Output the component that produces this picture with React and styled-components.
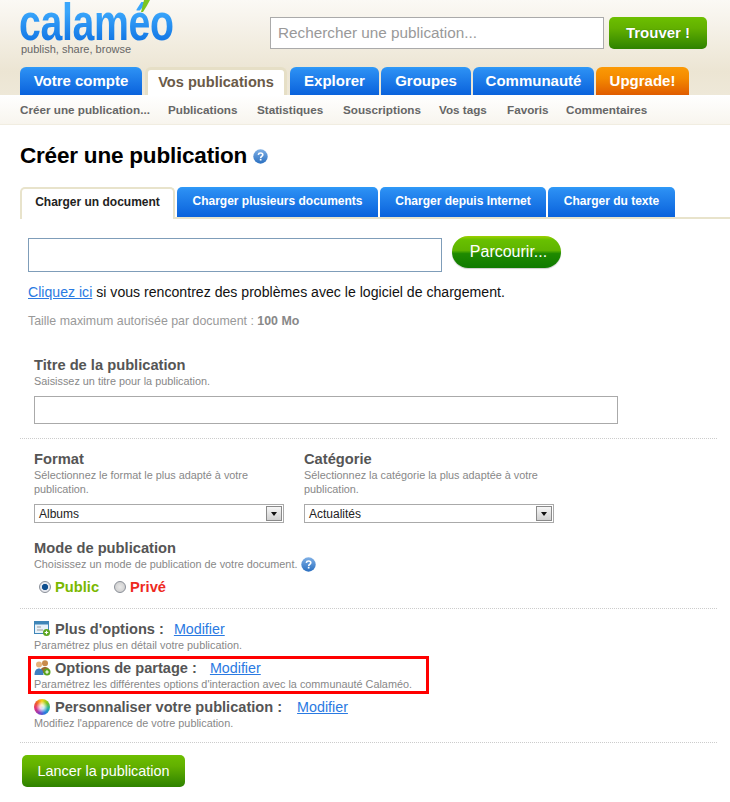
import React from "react";
import styled, { createGlobalStyle } from "styled-components";

const Global = createGlobalStyle`
  html, body { margin: 0; padding: 0; background: #fff; }
  body { font-family: "Liberation Sans", Arial, sans-serif; width: 730px; height: 802px; overflow: hidden; }
  * { box-sizing: border-box; }
`;

const blue = "linear-gradient(#2f9bf8 0%, #2a8df2 12%, #0a62dc 100%)";
const orange = "linear-gradient(#fb9a05 0%, #f48a00 40%, #e05c00 100%)";
const green = "linear-gradient(#6dbf00 0%, #62b000 35%, #2e8200 100%)";

const Page = styled.div`width: 730px; height: 802px; background: #fff;`;
const Header = styled.header`
  height: 95px;
  background: linear-gradient(#fbf9f5 0%, #ece5d3 75%, #eee8d8 100%);
  padding-left: 20px;
  display: flex;
  flex-direction: column;
`;
const TopRow = styled.div`height: 67px; display: flex;`;
const Brand = styled.div`width: 250px; position: relative; height: 67px;`;
const LogoText = styled.div`
  font-family: "Liberation Sans", sans-serif;
  font-weight: 700;
  font-size: 52px;
  line-height: 43px;
  height: 43px;
  margin: 1px 0 -1px -1px;
  letter-spacing: -0.5px;
  width: 206px;
  white-space: nowrap;
  background: linear-gradient(#3aa6fb 25%, #1479e6 90%);
  -webkit-background-clip: text;
  background-clip: text;
  color: transparent;
  transform: scaleX(0.755);
  transform-origin: 0 0;
`;
const Leaf = styled.svg`position: absolute; left: 118px; top: 0;`;
const Tagline = styled.div`font-size: 11px; line-height: 13px; color: #666; margin-left: 1px;`;
const SearchBox = styled.div`
  width: 334px; height: 32px; margin-top: 17px; background: #fff; border: 1px solid #aaa;
  font-size: 15.3px; line-height: 29px; color: #999; padding-left: 7px;
`;
const FindButton = styled.div`
  width: 98px; height: 32px; margin: 17px 0 0 5px; border-radius: 5px; background: ${green};
  color: #fff; font-weight: 700; font-size: 15px; line-height: 31px; text-align: center; text-shadow: 0 0 1px #246600;
`;
const MainTabs = styled.nav`display: flex; height: 28px; align-items: flex-end;`;
const MainTab = styled.div`
  width: ${p => p.$w}px; margin-right: ${p => p.$gap}px; height: 28px;
  border-radius: 6px 6px 0 0; text-align: center; font-weight: 700; font-size: 15px; line-height: 28px;
  color: #fff; background: ${p => (p.$tone === "orange" ? orange : blue)};
  ${p => p.$active && `
    background: #fff; color: #6a5a48; border: 3px solid #e6dfc6; border-bottom: 0; line-height: 24px; font-size: 14.6px;
  `}
`;
const SubNav = styled.nav`
  height: 30px; display: flex; padding-left: 20px; background: linear-gradient(#ffffff, #f8f5ee);
  border-bottom: 1px solid #f1ede1;
  font-size: 11.7px; font-weight: 700; color: #666; line-height: 29px;
`;
const SubItem = styled.span`width: ${p => p.$w}px; white-space: nowrap;`;
const Title = styled.h1`
  margin: 17px 0 0 20px; height: 28px; display: flex; align-items: center; gap: 6px;
  font-size: 22.5px; line-height: 28px; font-weight: 700; color: #000; letter-spacing: -0.2px;
`;
const Help = ({ size = 15 }) => (
  <svg width={size} height={size} viewBox="0 0 15 15" aria-hidden="true">
    <defs>
      <linearGradient id="hg" x1="0" y1="0" x2="0" y2="1">
        <stop offset="0" stopColor="#7fb0e6" />
        <stop offset="1" stopColor="#2a6fc0" />
      </linearGradient>
    </defs>
    <circle cx="7.5" cy="7.5" r="7.2" fill="url(#hg)" />
    <path d="M5.3 5.8c.2-1.2 1.1-1.8 2.3-1.8 1.3 0 2.2.7 2.2 1.8 0 1.7-2.1 1.6-2.1 3.1" fill="none" stroke="#fff" strokeWidth="1.6" />
    <rect x="6.8" y="9.8" width="1.7" height="1.7" fill="#fff" />
  </svg>
);
const DocTabs = styled.div`
  margin: 17px 0 0 20px; height: 32px; display: flex; align-items: flex-start;
  border-bottom: 2px solid #e8e3cb;
`;
const DocTab = styled.div`
  width: ${p => p.$w}px; margin-right: 2px; height: 30px; border-radius: 5px 5px 0 0;
  background: ${blue}; color: #fff; font-size: 12px; font-weight: 700; line-height: 29px; text-align: center;
  ${p => p.$active && `
    height: 32px; margin-bottom: -2px; background: #fff; color: #222; border: 2px solid #e8e3cb; border-bottom: 0; line-height: 27px;
  `}
`;
const Upload = styled.div`padding: 17px 0 0 28px; display: flex; align-items: flex-start;`;
const FileBox = styled.div`width: 414px; height: 34px; margin-top: 2px; border: 1px solid #7f9db9; background: #fff;`;
const Browse = styled.div`
  width: 109px; height: 32px; margin-left: 10px; padding-left: 4px; border-radius: 16px; color: #fff; font-size: 16px; line-height: 32px;
  text-align: center; background: linear-gradient(#9ed000 0%, #68c000 12%, #5fb400 45%, #1f8a00 55%, #0f7a00 100%);
  box-shadow: 0 1px 1px #ccc;
`;
const LinkLine = styled.p`margin: 12px 0 0 28px; font-size: 14.12px; line-height: 16px; color: #111; height: 16px;`;
const A = styled.a`color: #2a7ae2; text-decoration: underline;`;
const Limit = styled.p`margin: 14px 0 0 28px; font-size: 12.4px; line-height: 14px; color: #999; height: 14px; b { color: #888; }`;
const Section = styled.section`padding-left: 34px; margin-top: ${p => p.$top}px;`;
const Label = styled.div`font-size: 14.7px; font-weight: 700; line-height: 16px; color: #555;`;
const Hint = styled.div`font-size: 10.85px; line-height: 14px; color: #888; margin-top: ${p => p.$top || 0}px; white-space: ${p => (p.$wrap ? "normal" : "nowrap")};`;
const TextBox = styled.div`width: 584px; height: 28px; margin-top: 8px; border: 1px solid #aaa; background: #fff;`;
const Dotted = styled.div`margin-left: 20px; width: 697px; margin-top: ${p => p.$top}px; border-top: 1px dotted #ccc;`;
const Columns = styled.div`display: flex; padding: 12px 0 0 34px;`;
const Col = styled.div`width: 270px;`;
const ColHint = styled(Hint)`width: 235px; height: 28px; margin-top: 1px;`;
const Select = styled.div`
  width: 250px; height: 19px; margin-top: 8px; border: 1px solid #aaa; background: #fff;
  display: flex; justify-content: space-between; font-size: 12px; line-height: 18px; color: #222; padding-left: 4px;
`;
const Arrow = styled.div`
  width: 16px; height: 15px; margin: 1px; background: linear-gradient(#f6f6f6, #d0d0d0); border: 1px solid #8a8a8a;
  display: flex; align-items: center; justify-content: center;
  &::after { content: ""; border: 3.5px solid transparent; border-top: 4px solid #111; border-bottom: 0; }
`;
const HintRow = styled.div`display: flex; align-items: center; gap: 4px; height: 16px;`;
const Radios = styled.div`display: flex; align-items: center; height: 16px; margin: 7px 0 0 5px; font-size: 14.7px; font-weight: 700;`;
const Radio = styled.span`
  width: 12px; height: 12px; border-radius: 50%; margin-right: 4px;
  border: 1px solid #8a8f98;
  background: ${p => (p.$on ? "radial-gradient(circle, #0f4f8f 0 2.8px, #e6e8ee 3.4px)" : "radial-gradient(circle, #e8e8e8, #c8c8c8)")};
`;
const RadioLabel = styled.span`color: ${p => p.$c}; margin-right: ${p => p.$gap}px;`;
const OptionHead = styled.div`display: flex; align-items: center; height: 16px;`;
const IconSlot = styled.span`width: 21px; height: 16px; display: flex; align-items: center; flex: none;`;
const OptionLabel = styled.span`font-size: 14.6px; font-weight: 700; color: #555; margin-right: ${p => p.$gap}px; white-space: nowrap;`;
const OptionLink = styled(A)`font-size: 14.3px;`;
const Option = styled.div`margin-left: 34px; height: 35px; margin-top: ${p => p.$top}px;`;
const Highlight = styled.div`
  margin-left: 28px; width: 401px; height: 38px; border: 3px solid #f00; padding: 1px 0 0 3px;
`;
const Launch = styled.div`
  margin: 12px 0 0 22px; width: 163px; height: 32px; border-radius: 5px; background: ${green};
  color: #fff; font-size: 14.4px; line-height: 32px; text-align: center;
`;

const OptionsIcon = () => (
  <svg width="17" height="16" viewBox="0 0 17 16" aria-hidden="true">
    <rect x="0.5" y="0.5" width="14" height="12" fill="#e8f2fa" stroke="#3f86b8" />
    <rect x="1" y="1" width="13" height="2.5" fill="#3f86b8" />
    <path d="M3 6h4M3 9h6" stroke="#999" strokeWidth="1.2" />
    <circle cx="12.5" cy="11.5" r="3.5" fill="#5aa51e" />
    <path d="M10.7 11.5h3.6M12.5 9.7v3.6" stroke="#fff" strokeWidth="1.2" />
  </svg>
);
const ShareIcon = () => (
  <svg width="17" height="16" viewBox="0 0 17 16" aria-hidden="true">
    <circle cx="11" cy="3.2" r="3" fill="#c98a4a" />
    <path d="M6 13c0-4 2-6 5-6s5 2 5 6z" fill="#9a6a30" />
    <circle cx="5" cy="4.5" r="3" fill="#e6b27a" />
    <path d="M0.5 15c0-4.5 2-6.5 4.5-6.5s4.5 2 4.5 6.5z" fill="#3f7fc0" />
    <circle cx="13" cy="12" r="3.5" fill="#5aa51e" />
    <path d="M11.2 12h3.6M13 10.2v3.6" stroke="#fff" strokeWidth="1.2" />
  </svg>
);
const Wheel = styled.span`
  display: block; width: 16px; height: 16px; border-radius: 50%;
  background: radial-gradient(circle, rgba(255,255,255,.8) 0 2px, rgba(255,255,255,0) 6px),
    conic-gradient(#f7d31a, #7cc520, #22b0a0, #2a7ae2, #8a3ec0, #e0307a, #f0602a, #f7d31a);
`;

const tabs = [
  ["Votre compte", 122, 3], ["Vos publications", 142, 3, true], ["Explorer", 89, 2],
  ["Groupes", 90, 2], ["Communauté", 121, 2], ["Upgrade!", 93, 0, false, "orange"],
];
const sub = [
  ["Créer une publication...", 148], ["Publications", 89], ["Statistiques", 86], ["Souscriptions", 96],
  ["Vos tags", 68], ["Favoris", 59], ["Commentaires", 100],
];
const docTabs = [
  ["Charger un document", 155, true], ["Charger plusieurs documents", 201], ["Charger depuis Internet", 166], ["Charger du texte", 127],
];

export default function App() {
  return (
    <Page>
      <Global />
      <Header>
        <TopRow>
          <Brand>
            <LogoText>calaméo</LogoText>
            <Leaf width="14" height="12" viewBox="0 0 14 12"><path d="M3 12 L6 0 H12 Q9 6 5 12z" fill="#7cc520" /></Leaf>
            <Tagline>publish, share, browse</Tagline>
          </Brand>
          <SearchBox>Rechercher une publication...</SearchBox>
          <FindButton>Trouver !</FindButton>
        </TopRow>
        <MainTabs>
          {tabs.map(([t, w, g, a, tone]) => <MainTab key={t} $w={w} $gap={g} $active={a} $tone={tone}>{t}</MainTab>)}
        </MainTabs>
      </Header>
      <SubNav>{sub.map(([t, w]) => <SubItem key={t} $w={w}>{t}</SubItem>)}</SubNav>
      <Title>Créer une publication <Help /></Title>
      <DocTabs>{docTabs.map(([t, w, a]) => <DocTab key={t} $w={w} $active={a}>{t}</DocTab>)}</DocTabs>
      <Upload>
        <FileBox />
        <Browse>Parcourir...</Browse>
      </Upload>
      <LinkLine><A href="#">Cliquez ici</A> si vous rencontrez des problèmes avec le logiciel de chargement.</LinkLine>
      <Limit>Taille maximum autorisée par document : <b>100 Mo</b></Limit>
      <Section $top={29}>
        <Label>Titre de la publication</Label>
        <Hint $top={1}>Saisissez un titre pour la publication.</Hint>
        <TextBox />
      </Section>
      <Dotted $top={14} />
      <Columns>
        <Col>
          <Label>Format</Label>
          <ColHint $wrap>Sélectionnez le format le plus adapté à votre publication.</ColHint>
          <Select>Albums<Arrow /></Select>
        </Col>
        <Col>
          <Label>Catégorie</Label>
          <ColHint $wrap>Sélectionnez la catégorie la plus adaptée à votre publication.</ColHint>
          <Select>Actualités<Arrow /></Select>
        </Col>
      </Columns>
      <Section $top={17}>
        <Label>Mode de publication</Label>
        <HintRow><Hint>Choisissez un mode de publication de votre document.</Hint><Help /></HintRow>
        <Radios>
          <Radio $on /><RadioLabel $c="#7ab800" $gap={15}>Public</RadioLabel>
          <Radio /><RadioLabel $c="#ee2a1f" $gap={0}>Privé</RadioLabel>
        </Radios>
      </Section>
      <Dotted $top={13} />
      <Option $top={12}>
        <OptionHead><IconSlot><OptionsIcon /></IconSlot><OptionLabel $gap={10}>Plus d'options :</OptionLabel><OptionLink href="#">Modifier</OptionLink></OptionHead>
        <Hint $top={1}>Paramétrez plus en détail votre publication.</Hint>
      </Option>
      <Highlight>
        <OptionHead><IconSlot><ShareIcon /></IconSlot><OptionLabel $gap={13}>Options de partage :</OptionLabel><OptionLink href="#">Modifier</OptionLink></OptionHead>
        <Hint $top={1}>Paramétrez les différentes options d'interaction avec la communauté Calaméo.</Hint>
      </Highlight>
      <Option $top={5}>
        <OptionHead><IconSlot><Wheel /></IconSlot><OptionLabel $gap={15}>Personnaliser votre publication :</OptionLabel><OptionLink href="#">Modifier</OptionLink></OptionHead>
        <Hint $top={1}>Modifiez l'apparence de votre publication.</Hint>
      </Option>
      <Dotted $top={8} />
      <Launch>Lancer la publication</Launch>
    </Page>
  );
}
